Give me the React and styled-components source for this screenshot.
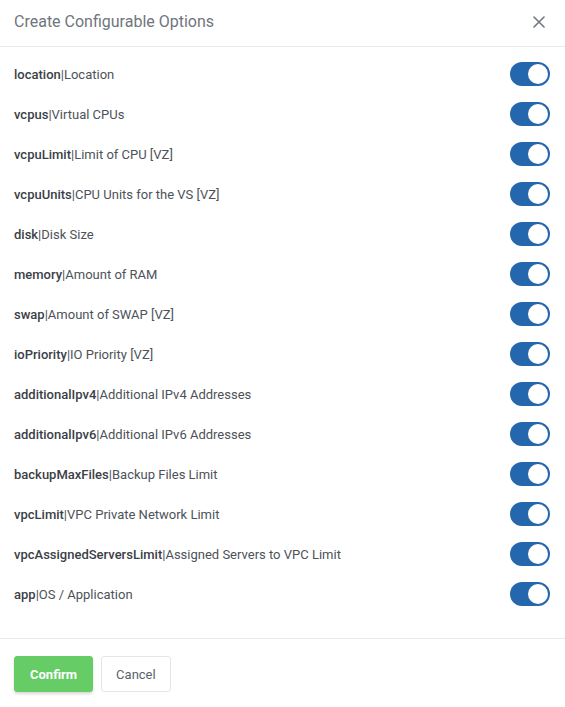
import React, { useState } from "react";
import styled, { createGlobalStyle } from "styled-components";

const Global = createGlobalStyle`
  html, body { margin: 0; padding: 0; background: #fff; }
  body { font-family: Roboto, "Liberation Sans", Arial, sans-serif; }
  * { box-sizing: border-box; }
`;

const Modal = styled.div`
  width: 565px;
  height: 707px;
  display: flex;
  flex-direction: column;
  background: #fff;
`;

const Header = styled.div`
  height: 47px;
  display: flex;
  align-items: center;
  justify-content: space-between;
  padding: 0 16px 3px 14px;
  border-bottom: 1px solid #e9ebee;
`;

const Title = styled.h5`
  margin: 0;
  font-size: 16px;
  font-weight: 400;
  color: #6f757d;
`;

const CloseBtn = styled.button`
  border: 0;
  background: none;
  padding: 0;
  width: 20px;
  height: 20px;
  display: flex;
  align-items: center;
  justify-content: center;
  cursor: pointer;
`;

const Body = styled.div`
  flex: 1;
  padding: 7px 15px 0 14px;
  display: flex;
  flex-direction: column;
  border-bottom: 1px solid #e9ebee;
`;

const Row = styled.div`
  height: 40px;
  display: flex;
  align-items: center;
  justify-content: space-between;
`;

const Label = styled.span`
  font-size: 13px;
  color: #4d5259;
  b { font-weight: 500; color: #3b4047; }
`;

const Track = styled.button`
  width: 40px;
  height: 24px;
  border-radius: 12px;
  border: 0;
  padding: 0 2px;
  display: flex;
  align-items: center;
  justify-content: ${(p) => (p.$on ? "flex-end" : "flex-start")};
  background: ${(p) => (p.$on ? "#2467ad" : "#ced4da")};
  cursor: pointer;
`;

const Knob = styled.span`
  width: 20px;
  height: 20px;
  border-radius: 50%;
  background: #fff;
`;

const Footer = styled.div`
  height: 68px;
  display: flex;
  align-items: flex-start;
  gap: 8px;
  padding: 17px 14px 0;
`;

const Btn = styled.button`
  height: 36px;
  padding: 0 ${(p) => (p.$primary ? "15px" : "14px")};
  border-radius: 3px;
  font-family: inherit;
  font-size: 13px;
  font-weight: ${(p) => (p.$primary ? 700 : 400)};
  color: ${(p) => (p.$primary ? "#fff" : "#5c626a")};
  background: ${(p) => (p.$primary ? "#66cc66" : "#fff")};
  border: 1px solid ${(p) => (p.$primary ? "#66cc66" : "#e3e5e8")};
  box-shadow: ${(p) => (p.$primary ? "0 2px 3px rgba(0,0,0,0.15)" : "none")};
  cursor: pointer;
`;

const options = [
  ["location", "Location"],
  ["vcpus", "Virtual CPUs"],
  ["vcpuLimit", "Limit of CPU [VZ]"],
  ["vcpuUnits", "CPU Units for the VS [VZ]"],
  ["disk", "Disk Size"],
  ["memory", "Amount of RAM"],
  ["swap", "Amount of SWAP [VZ]"],
  ["ioPriority", "IO Priority [VZ]"],
  ["additionalIpv4", "Additional IPv4 Addresses"],
  ["additionalIpv6", "Additional IPv6 Addresses"],
  ["backupMaxFiles", "Backup Files Limit"],
  ["vpcLimit", "VPC Private Network Limit"],
  ["vpcAssignedServersLimit", "Assigned Servers to VPC Limit"],
  ["app", "OS / Application"],
];

export default function App() {
  const [state, setState] = useState(() => options.map(() => true));
  return (
    <>
      <Global />
      <Modal>
        <Header>
          <Title>Create Configurable Options</Title>
          <CloseBtn aria-label="Close">
            <svg width="12" height="12" viewBox="0 0 12 12">
              <path d="M1 1L11 11M11 1L1 11" stroke="#707780" strokeWidth="1.6" strokeLinecap="round" />
            </svg>
          </CloseBtn>
        </Header>
        <Body>
          {options.map(([k, v], i) => (
            <Row key={k}>
              <Label>
                <b>{k}</b>|{v}
              </Label>
              <Track
                $on={state[i]}
                onClick={() => setState((s) => s.map((x, j) => (j === i ? !x : x)))}
              >
                <Knob />
              </Track>
            </Row>
          ))}
        </Body>
        <Footer>
          <Btn $primary>Confirm</Btn>
          <Btn>Cancel</Btn>
        </Footer>
      </Modal>
    </>
  );
}
